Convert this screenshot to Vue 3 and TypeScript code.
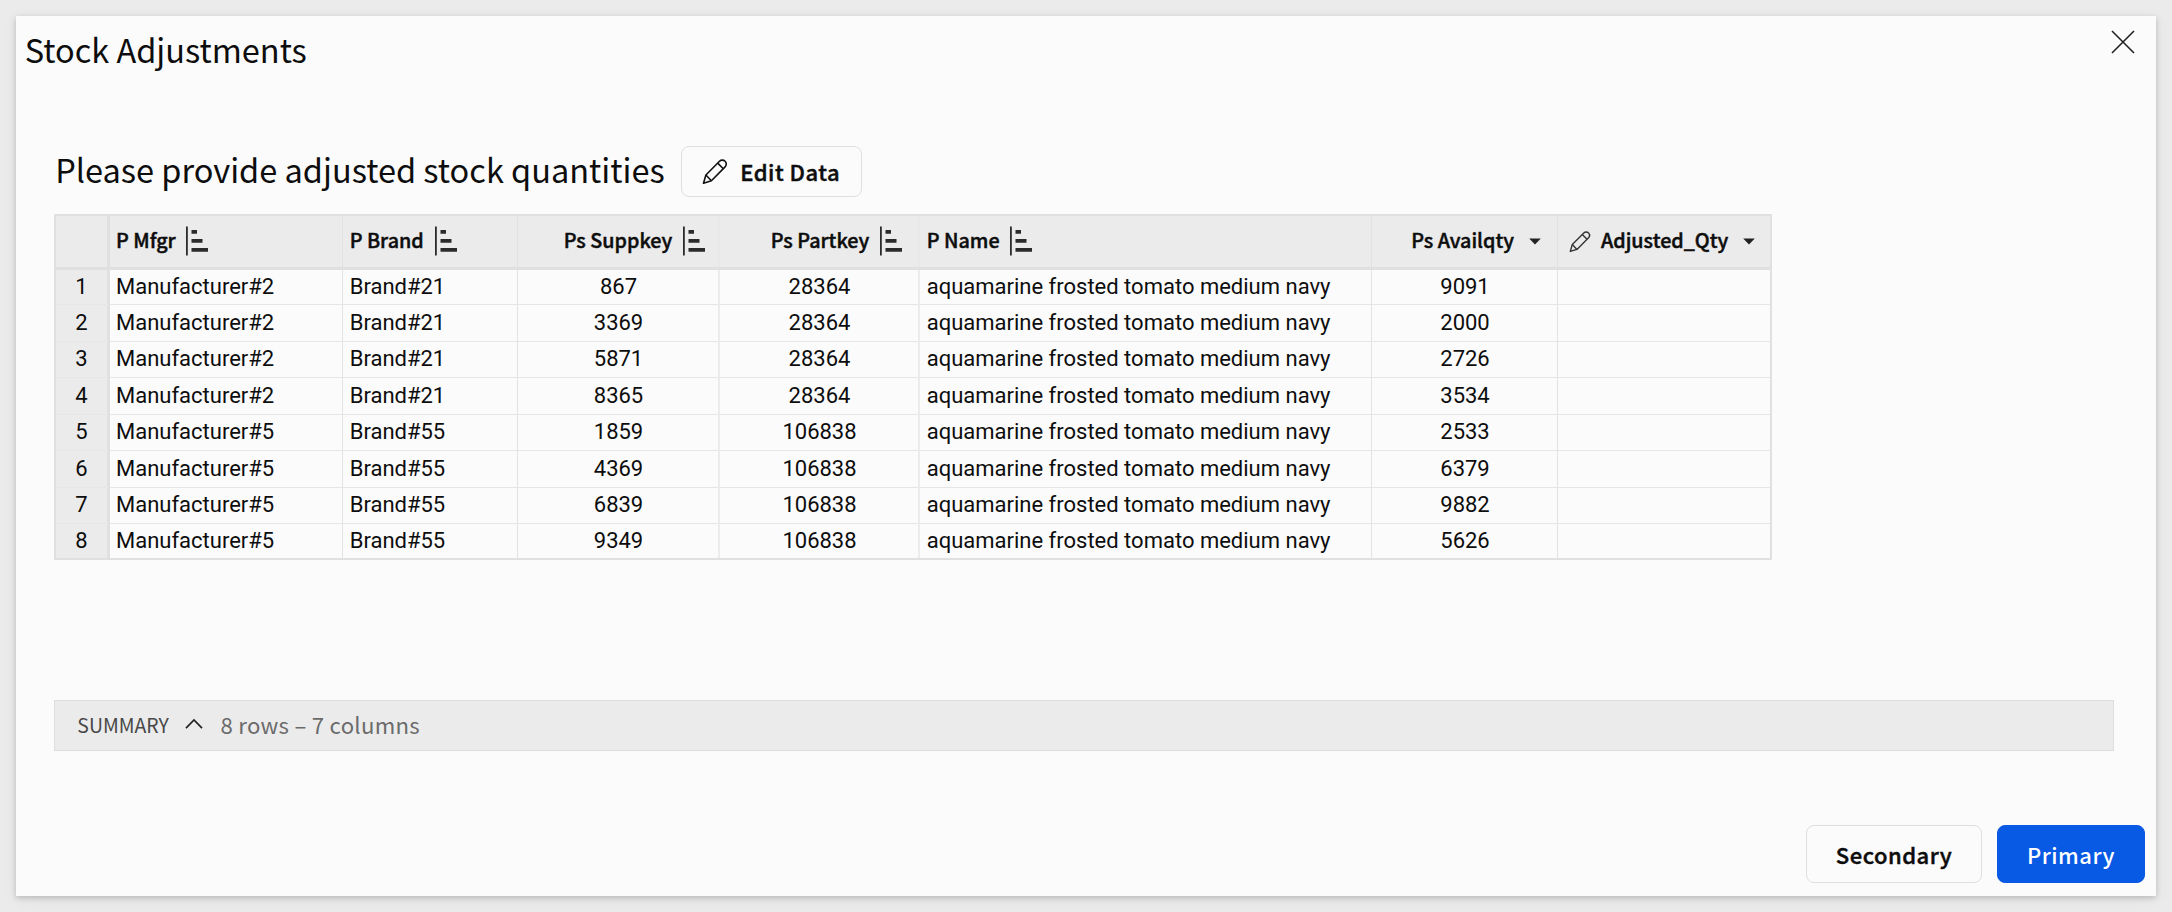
<script setup lang="ts">
type IconKind = 'sort' | 'caret'

interface Column {
  key: string
  label: string
  icon: IconKind
  numeric?: boolean
  editable?: boolean
}

const columns: Column[] = [
  { key: 'mfgr', label: 'P Mfgr', icon: 'sort' },
  { key: 'brand', label: 'P Brand', icon: 'sort' },
  { key: 'suppkey', label: 'Ps Suppkey', icon: 'sort', numeric: true },
  { key: 'partkey', label: 'Ps Partkey', icon: 'sort', numeric: true },
  { key: 'name', label: 'P Name', icon: 'sort' },
  { key: 'availqty', label: 'Ps Availqty', icon: 'caret', numeric: true },
  { key: 'adjusted', label: 'Adjusted_Qty', icon: 'caret', numeric: true, editable: true },
]

const stock: [string, string, string, string, string][] = [
  ['Manufacturer#2', 'Brand#21', '867', '28364', '9091'],
  ['Manufacturer#2', 'Brand#21', '3369', '28364', '2000'],
  ['Manufacturer#2', 'Brand#21', '5871', '28364', '2726'],
  ['Manufacturer#2', 'Brand#21', '8365', '28364', '3534'],
  ['Manufacturer#5', 'Brand#55', '1859', '106838', '2533'],
  ['Manufacturer#5', 'Brand#55', '4369', '106838', '6379'],
  ['Manufacturer#5', 'Brand#55', '6839', '106838', '9882'],
  ['Manufacturer#5', 'Brand#55', '9349', '106838', '5626'],
]

const rows: Record<string, string>[] = stock.map(([mfgr, brand, suppkey, partkey, availqty]) => ({
  mfgr,
  brand,
  suppkey,
  partkey,
  name: 'aquamarine frosted tomato medium navy',
  availqty,
  adjusted: '',
}))
</script>

<template>
  <div class="backdrop">
    <main class="modal">
      <header class="modal-head">
        <h1 class="title">Stock Adjustments</h1>
        <button class="close" type="button" aria-label="Close">
          <svg width="24" height="24" viewBox="0 0 24 24">
            <path d="M1 1L23 23M23 1L1 23" fill="none" stroke="#222" stroke-width="1.6" />
          </svg>
        </button>
      </header>

      <section class="content">
        <div class="prompt">
          <h2 class="prompt-text">Please provide adjusted stock quantities</h2>
          <button class="btn edit" type="button">
            <svg class="pencil" width="26" height="26" viewBox="0 0 26 26">
              <g fill="none" stroke="#111" stroke-width="1.6" stroke-linejoin="round">
                <path d="M1.5 24.2L3.9 16L17.5 2.3a3.8 3.8 0 0 1 5.6 5.6L9.4 21.8Z" />
                <path d="M3.9 16L9.4 21.8M15.7 4.1L21.3 9.7" />
              </g>
            </svg>
            <span class="edit-label strong">Edit Data</span>
          </button>
        </div>

        <div class="table">
          <div class="line head">
            <div class="cell index"></div>
            <div
              v-for="col in columns"
              :key="col.key"
              class="cell"
              :class="[col.key, { numeric: col.numeric }]"
            >
              <svg v-if="col.editable" class="col-pencil" width="22" height="22" viewBox="0 0 26 26">
                <g fill="none" stroke="#333" stroke-width="1.6" stroke-linejoin="round">
                  <path d="M1.5 24.2L3.9 16L17.5 2.3a3.8 3.8 0 0 1 5.6 5.6L9.4 21.8Z" />
                  <path d="M3.9 16L9.4 21.8M15.7 4.1L21.3 9.7" />
                </g>
              </svg>
              <span class="label strong">{{ col.label }}</span>
              <svg v-if="col.icon === 'sort'" class="sort" width="22" height="30" viewBox="0 0 22 30">
                <path
                  d="M0 .5h1.8v29H0zM5.5 4h5.5v3.7H5.5zM5.5 13h11v3.7h-11zM5.5 22h16.5v3.7H5.5z"
                  fill="#2b2b2b"
                />
              </svg>
              <svg v-else class="caret" width="12" height="7" viewBox="0 0 12 7">
                <path d="M.2.4h11.6L6 6.6z" fill="#222" />
              </svg>
            </div>
          </div>
          <div v-for="(row, i) in rows" :key="i" class="line body">
            <div class="cell index">{{ i + 1 }}</div>
            <div
              v-for="col in columns"
              :key="col.key"
              class="cell"
              :class="[col.key, { numeric: col.numeric }]"
            >
              {{ row[col.key] }}
            </div>
          </div>
        </div>

        <div class="summary">
          <span class="summary-title">SUMMARY</span>
          <svg class="chevron" width="18" height="12" viewBox="0 0 18 12">
            <path d="M1 10.2L9 2L17 10.2" fill="none" stroke="#222" stroke-width="1.7" />
          </svg>
          <span class="summary-count">8 rows – 7 columns</span>
        </div>
      </section>

      <footer class="actions">
        <button class="btn secondary" type="button"><span class="strong">Secondary</span></button>
        <button class="btn primary" type="button">Primary</button>
      </footer>
    </main>
  </div>
</template>

<style>
body {
  margin: 0;
}
</style>

<style scoped>
* {
  box-sizing: border-box;
}

.backdrop {
  height: 912px;
  padding: 16px;
  overflow: hidden;
  background: #ebebeb;
  color: #0d0d0d;
  font-family: 'Noto Sans CJK SC', 'Noto Sans', sans-serif;
}

.modal {
  display: flex;
  flex-direction: column;
  height: 880px;
  background: #fbfbfb;
  box-shadow:
    0 2px 6px rgba(0, 0, 0, 0.2),
    0 4px 20px rgba(0, 0, 0, 0.04);
}

.modal-head {
  display: flex;
  justify-content: space-between;
  height: 130px;
  padding: 9px 21px 0 8.7px;
}

h1,
h2 {
  margin: 0;
  font-size: 32.5px;
  font-weight: 400;
  line-height: 48px;
  white-space: nowrap;
}

.close {
  display: flex;
  align-self: flex-start;
  margin-top: 5px;
  padding: 0;
  border: 0;
  background: none;
}

.content {
  padding: 0 42px 0 38px;
}

.prompt {
  display: flex;
  align-items: flex-start;
  height: 68px;
}

.prompt-text {
  width: 627px;
  padding-left: 1.2px;
  line-height: 45px;
}

.strong {
  font-weight: 500;
  -webkit-text-stroke: 0.45px currentColor;
}

.btn {
  display: flex;
  align-items: center;
  justify-content: center;
  padding: 0;
  border: 1px solid #dfdfdf;
  border-radius: 8px;
  background: #fbfbfb;
  color: #0d0d0d;
  font-family: inherit;
  font-size: 22px;
  letter-spacing: 0.5px;
  line-height: 32px;
}

.edit {
  justify-content: flex-start;
  width: 181px;
  height: 51px;
  padding-left: 20px;
}

.edit-label {
  padding-bottom: 2px;
}

.pencil {
  margin-right: 12.3px;
}

.table {
  width: 1718px;
  border: 2px solid #e0e0e0;
}

.line {
  display: grid;
  grid-template-columns: 54px 233px 175px 202px 200px 452px 186px 212px;
}

.head {
  height: 54px;
  border-bottom: 3px solid #e0e0e0;
  background: #ebebeb;
}

.body {
  height: 36.5px;
  font-family: Roboto, sans-serif;
  font-size: 22px;
  line-height: 34px;
}

.body:nth-child(2) {
  height: 35px;
}

.body:last-child {
  height: 34px;
}

.cell {
  display: flex;
  align-items: center;
  border-right: 1px solid #e3e3e3;
  padding-left: 6.7px;
  white-space: nowrap;
}

.body .cell {
  border-bottom: 1px solid #e6e6e6;
}

.body:last-child .cell {
  border-bottom: 0;
}

.cell.index {
  justify-content: center;
  padding: 0;
  border-right: 3px solid #e0e0e0;
  background: #ebebeb;
}

.cell.mfgr {
  padding-left: 6px;
}

.cell.adjusted {
  border-right: 0;
}

.cell.suppkey,
.cell.partkey {
  border-right: 2px solid #ececec;
}

.body .numeric {
  justify-content: center;
  padding: 0 0 0 1px;
}

.head .cell {
  padding-bottom: 4px;
  font-size: 19.75px;
}

.head .numeric {
  justify-content: flex-end;
  padding-right: 16px;
}

.head .suppkey {
  padding-right: 13px;
}

.head .adjusted {
  padding-right: 14.7px;
}

.head .suppkey,
.head .partkey {
  border-right-color: #e8e8e8;
}

.label {
  line-height: 30px;
}

.sort {
  margin: 2px 0 0 10.8px;
}

.caret {
  margin: 4px 0 0 15px;
}

.col-pencil {
  margin: 5px 10px 0 0;
}

.summary {
  display: flex;
  align-items: center;
  height: 51px;
  margin-top: 139.5px;
  padding-left: 22.3px;
  border: 1px solid #dedede;
  background: #ebebeb;
}

.summary-title {
  margin-top: -2px;
  color: #484848;
  font-size: 19.45px;
}

.chevron {
  margin: -3px 0 0 16.5px;
}

.summary-count {
  margin: -2px 0 0 17px;
  color: #6b6b6b;
  font-size: 22.2px;
  letter-spacing: 0.26px;
}

.actions {
  display: flex;
  justify-content: flex-end;
  gap: 15px;
  margin-top: auto;
  padding: 0 11px 13px 0;
}

.actions .btn {
  height: 58px;
}

.secondary {
  width: 176px;
}

.actions .primary {
  width: 148px;
  border-color: #0859e4;
  background: #0859e4;
  color: #fff;
  font-weight: 500;
}
</style>
